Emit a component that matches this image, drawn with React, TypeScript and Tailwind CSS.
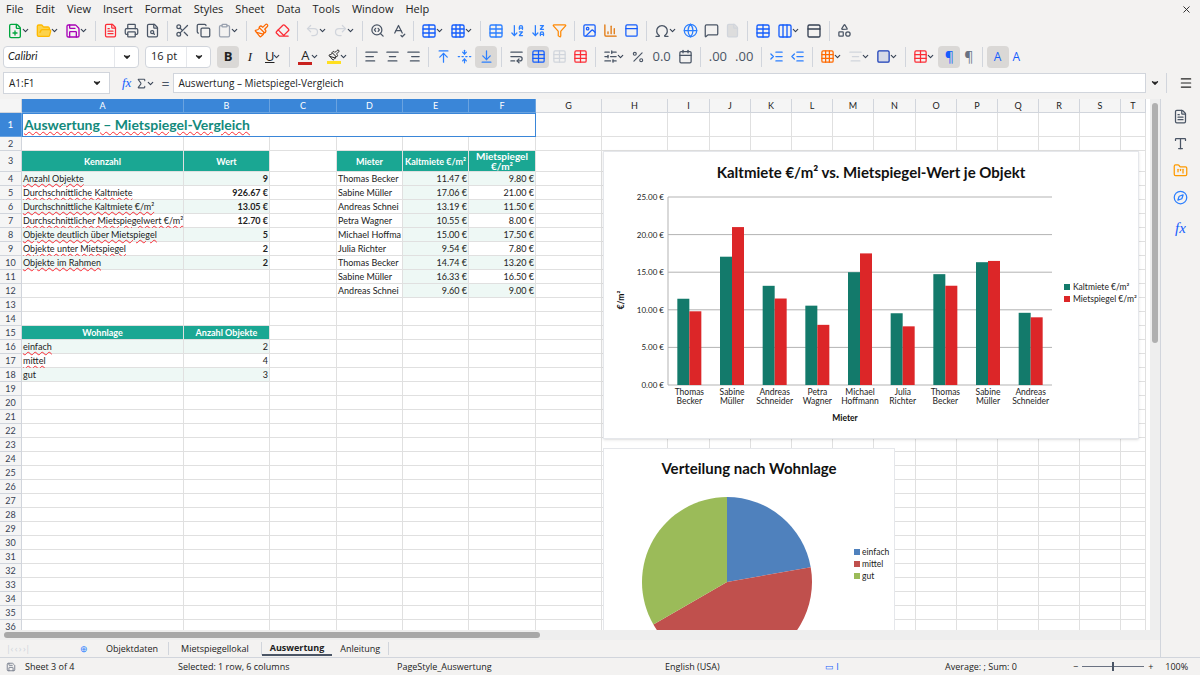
import {
  FilePlus, FolderOpen, Save, FileText, Printer, FileSearch, Scissors, Copy, Clipboard, Paintbrush, Eraser,
  Undo2, Redo2, SearchCode, SpellCheck, Table, Grid3x3, ArrowDownAZ, ArrowDownZA, Filter, Image, BarChart3,
  Omega, Globe, MessageSquare, File, Columns3, PanelTop, Shapes, ChevronDown, AlignLeft, AlignCenter, AlignRight,
  ArrowUpToLine, FoldVertical, ArrowDownToLine, WrapText, Percent, Calendar, IndentIncrease, IndentDecrease,
  Square, Menu, SlidersHorizontal, Type, FolderKanban, Compass, X, Sigma,
} from 'lucide-react'

const COLS = ['A', 'B', 'C', 'D', 'E', 'F', 'G', 'H', 'I', 'J', 'K', 'L', 'M', 'N', 'O', 'P', 'Q', 'R', 'S', 'T']
const W = [162, 86, 67, 66, 66, 67, 66, 66, 42, 41, 41, 41, 41, 42, 41, 41, 41, 41, 41, 25]

const teal = 'bg-[#1aa793] text-white font-bold text-center'
const tint = 'bg-[#eef8f5]'

const statsRows: [string, string][] = [
  ['Anzahl Objekte', '9'],
  ['Durchschnittliche Kaltmiete', '926.67 €'],
  ['Durchschnittliche Kaltmiete €/m²', '13.05 €'],
  ['Durchschnittlicher Mietspiegelwert €/m²', '12.70 €'],
  ['Objekte deutlich über Mietspiegel', '5'],
  ['Objekte unter Mietspiegel', '2'],
  ['Objekte im Rahmen', '2'],
]
const mieter: [string, number, number][] = [
  ['Thomas Becker', 11.47, 9.8],
  ['Sabine Müller', 17.06, 21.0],
  ['Andreas Schnei', 13.19, 11.5],
  ['Petra Wagner', 10.55, 8.0],
  ['Michael Hoffma', 15.0, 17.5],
  ['Julia Richter', 9.54, 7.8],
  ['Thomas Becker', 14.74, 13.2],
  ['Sabine Müller', 16.33, 16.5],
  ['Andreas Schnei', 9.6, 9.0],
]
const chartNames = [['Thomas', 'Becker'], ['Sabine', 'Müller'], ['Andreas', 'Schneider'], ['Petra', 'Wagner'], ['Michael', 'Hoffmann'], ['Julia', 'Richter'], ['Thomas', 'Becker'], ['Sabine', 'Müller'], ['Andreas', 'Schneider']]
const lage: [string, string][] = [['einfach', '2'], ['mittel', '4'], ['gut', '3']]

type Cell = { t?: string; cls?: string; sq?: boolean }

function cellAt(r: number, c: number): Cell {
  if (r === 3) {
    if (c === 0) return { t: 'Kennzahl', cls: teal }
    if (c === 1) return { t: 'Wert', cls: teal }
    if (c === 3) return { t: 'Mieter', cls: teal }
    if (c === 4) return { t: 'Kaltmiete €/m²', cls: teal }
    if (c === 5) return { t: 'Mietspiegel €/m²', cls: teal + ' leading-[9px] text-[10px] px-3' }
  }
  if (r >= 4 && r <= 10 && c <= 1) {
    const s = statsRows[r - 4]
    const bg = r % 2 === 0 ? tint : ''
    return c === 0 ? { t: s[0], cls: bg + ' whitespace-nowrap', sq: true } : { t: s[1], cls: bg + ' text-right font-bold' }
  }
  if (r >= 4 && r <= 12 && c >= 3 && c <= 5) {
    const m = mieter[r - 4]
    if (c === 3) return { t: m[0], cls: 'whitespace-nowrap overflow-hidden' }
    if (c === 4) return { t: m[1].toFixed(2) + ' €', cls: tint + ' text-right' }
    return { t: m[2].toFixed(2) + ' €', cls: (r % 2 === 0 ? tint : '') + ' text-right' }
  }
  if (r === 15) {
    if (c === 0) return { t: 'Wohnlage', cls: teal }
    if (c === 1) return { t: 'Anzahl Objekte', cls: teal }
  }
  if (r >= 16 && r <= 18 && c <= 1) {
    const l = lage[r - 16]
    const bg = r % 2 === 0 ? tint : ''
    return c === 0 ? { t: l[0], cls: bg, sq: r !== 18 } : { t: l[1], cls: bg + ' text-right' }
  }
  return {}
}

function rowH(r: number) {
  if (r === 1) return 'h-[24px]'
  if (r === 3) return 'h-[21px]'
  return 'h-[14px]'
}

function Ic({ children }: { children: React.ReactNode }) {
  return <div className="flex items-center px-[3px]">{children}</div>
}
function Dd() {
  return <ChevronDown size={9} strokeWidth={3} className="text-gray-700 -ml-[2px]" />
}
function Sep() {
  return <div className="w-px h-5 bg-gray-300 mx-1" />
}

function BarChart() {
  const x0 = 64, x1 = 448, y0 = 233, y1 = 45
  const gw = (x1 - x0) / 9
  const yv = (v: number) => y0 - (v / 25) * (y0 - y1)
  return (
    <svg width="534" height="286" className="bg-white" style={{ fontFamily: 'Lato, sans-serif' }}>
      <text x="267" y="26" textAnchor="middle" fontSize="15" fontWeight="bold" fill="#111">Kaltmiete €/m² vs. Mietspiegel-Wert je Objekt</text>
      {[0, 5, 10, 15, 20, 25].map(v => (
        <g key={v}>
          <line x1={x0} x2={x1} y1={yv(v)} y2={yv(v)} stroke="#b3b3b3" />
          <text x={x0 - 4} y={yv(v) + 3} textAnchor="end" fontSize="8" fill="#222">{v.toFixed(2)} €</text>
        </g>
      ))}
      <line x1={x0} x2={x0} y1={y1} y2={y0} stroke="#b3b3b3" />
      {mieter.map((m, i) => {
        const cx = x0 + gw * i + gw / 2
        return (
          <g key={i}>
            <rect x={cx - 12} y={yv(m[1])} width="12" height={y0 - yv(m[1])} fill="#137a6b" />
            <rect x={cx} y={yv(m[2])} width="12" height={y0 - yv(m[2])} fill="#dc2628" />
            <text x={cx} y={y0 + 10} textAnchor="middle" fontSize="8.5" fill="#222">{chartNames[i][0]}</text>
            <text x={cx} y={y0 + 19} textAnchor="middle" fontSize="8.5" fill="#222">{chartNames[i][1]}</text>
          </g>
        )
      })}
      <text x="241" y="269" textAnchor="middle" fontSize="8.5" fontWeight="bold" fill="#111">Mieter</text>
      <text x="20" y="148" textAnchor="middle" fontSize="8.5" fontWeight="bold" fill="#111" transform="rotate(-90 20 148)">€/m²</text>
      <rect x="460" y="132" width="6" height="6" fill="#137a6b" />
      <text x="469" y="138" fontSize="8.5" fill="#222">Kaltmiete €/m²</text>
      <rect x="460" y="144" width="6" height="6" fill="#dc2628" />
      <text x="469" y="150" fontSize="8.5" fill="#222">Mietspiegel €/m²</text>
    </svg>
  )
}

function PieChart() {
  const cx = 123, cy = 133, r = 85
  const pt = (deg: number) => {
    const a = ((deg - 90) * Math.PI) / 180
    return `${cx + r * Math.cos(a)} ${cy + r * Math.sin(a)}`
  }
  const slice = (a: number, b: number, fill: string) => (
    <path d={`M${cx} ${cy} L${pt(a)} A${r} ${r} 0 ${b - a > 180 ? 1 : 0} 1 ${pt(b)} Z`} fill={fill} />
  )
  return (
    <svg width="290" height="183" className="bg-white" style={{ fontFamily: 'Lato, sans-serif' }}>
      <text x="145" y="25" textAnchor="middle" fontSize="15" fontWeight="bold" fill="#111">Verteilung nach Wohnlage</text>
      {slice(0, 80, '#4f81bd')}
      {slice(80, 240, '#c0504d')}
      {slice(240, 360, '#9bbb59')}
      {[['einfach', '#4f81bd'], ['mittel', '#c0504d'], ['gut', '#9bbb59']].map(([l, c], i) => (
        <g key={l}>
          <rect x="250" y={100 + i * 12} width="6" height="6" fill={c} />
          <text x="258" y={106 + i * 12} fontSize="8.5" fill="#222">{l}</text>
        </g>
      ))}
    </svg>
  )
}

export default function App() {
  const rows = Array.from({ length: 37 }, (_, i) => i + 1)
  return (
    <div className="w-[1200px] h-[675px] overflow-hidden bg-[#f3f2f1] flex flex-col text-[#222]" style={{ fontFamily: '"Open Sans", "Noto Sans", sans-serif' }}>
      {/* menu */}
      <div className="h-[18px] flex items-center text-[11px] px-[6px] gap-[12px] shrink-0">
        {['File', 'Edit', 'View', 'Insert', 'Format', 'Styles', 'Sheet', 'Data', 'Tools', 'Window', 'Help'].map(m => <span key={m}>{m}</span>)}
        <X size={11} className="ml-auto mr-[2px]" />
      </div>
      {/* toolbar 1 */}
      <div className="h-[25px] flex items-center px-[4px] shrink-0">
        <Ic><FilePlus size={16} className="text-green-600" /><Dd /></Ic>
        <Ic><FolderOpen size={16} className="text-amber-400" fill="#fcd34d" /><Dd /></Ic>
        <Ic><Save size={16} className="text-fuchsia-700" /><Dd /></Ic>
        <Sep />
        <Ic><FileText size={15} className="text-red-500" /></Ic>
        <Ic><Printer size={15} className="text-gray-600" /></Ic>
        <Ic><FileSearch size={15} className="text-gray-600" /></Ic>
        <Sep />
        <Ic><Scissors size={15} className="text-gray-600" /></Ic>
        <Ic><Copy size={15} className="text-gray-600" /></Ic>
        <Ic><Clipboard size={15} className="text-gray-400" /><Dd /></Ic>
        <Sep />
        <Ic><Paintbrush size={15} className="text-orange-500" /></Ic>
        <Ic><Eraser size={15} className="text-red-500" /></Ic>
        <Sep />
        <Ic><Undo2 size={15} className="text-gray-300" /><Dd /></Ic>
        <Ic><Redo2 size={15} className="text-gray-300" /><Dd /></Ic>
        <Sep />
        <Ic><SearchCode size={15} className="text-gray-600" /></Ic>
        <Ic><SpellCheck size={15} className="text-gray-600" /></Ic>
        <Sep />
        <Ic><Table size={16} className="text-blue-600" /><Dd /></Ic>
        <Ic><Grid3x3 size={16} className="text-blue-600" /><Dd /></Ic>
        <Sep />
        <Ic><Table size={16} className="text-blue-500" /></Ic>
        <Ic><ArrowDownAZ size={15} className="text-blue-500" /></Ic>
        <Ic><ArrowDownZA size={15} className="text-blue-500" /></Ic>
        <Ic><Filter size={15} className="text-orange-400" /></Ic>
        <Sep />
        <Ic><Image size={15} className="text-blue-600" /></Ic>
        <Ic><BarChart3 size={15} className="text-amber-600" /></Ic>
        <Ic><PanelTop size={15} className="text-blue-600" /></Ic>
        <Sep />
        <Ic><Omega size={16} className="text-gray-600" /><Dd /></Ic>
        <Ic><Globe size={15} className="text-blue-500" /></Ic>
        <Ic><MessageSquare size={15} className="text-gray-600" /></Ic>
        <Ic><File size={15} className="text-gray-300" fill="#ddd" /></Ic>
        <Sep />
        <Ic><Table size={16} className="text-blue-600" /></Ic>
        <Ic><Columns3 size={16} className="text-blue-600" /><Dd /></Ic>
        <Ic><PanelTop size={16} className="text-gray-700" /></Ic>
        <Sep />
        <Ic><Shapes size={15} className="text-gray-600" /></Ic>
      </div>
      {/* toolbar 2 */}
      <div className="h-[27px] flex items-center px-[3px] shrink-0 text-[11px]">
        <div className="w-[136px] h-[22px] bg-white border border-gray-300 rounded-sm flex items-center">
          <span className="italic pl-[4px] flex-1" style={{ fontFamily: 'Lato, sans-serif' }}>Calibri</span>
          <div className="w-[24px] h-full flex items-center justify-center border-l border-gray-200"><ChevronDown size={10} strokeWidth={3} fill="#333" /></div>
        </div>
        <div className="w-[66px] h-[22px] bg-white border border-gray-300 rounded-sm flex items-center ml-[6px]">
          <span className="pl-[5px] flex-1">16 pt</span>
          <div className="w-[24px] h-full flex items-center justify-center border-l border-gray-200"><ChevronDown size={10} strokeWidth={3} fill="#333" /></div>
        </div>
        <div className="w-[22px] h-[22px] ml-[6px] bg-[#dad8d6] rounded flex items-center justify-center font-bold text-[13px]">B</div>
        <div className="w-[22px] flex justify-center italic text-[13px]" style={{ fontFamily: '"Liberation Serif", serif' }}>I</div>
        <div className="flex items-center px-1 text-[13px] underline">U<Dd /></div>
        <Sep />
        <div className="flex items-center px-1"><div className="flex flex-col items-center"><span className="text-[13px] leading-[13px]">A</span><div className="w-[14px] h-[3px] bg-[#c9211e]" /></div><Dd /></div>
        <div className="flex items-center px-1"><div className="flex flex-col items-center"><Paintbrush size={12} /><div className="w-[14px] h-[3px] bg-yellow-300" /></div><Dd /></div>
        <Sep />
        <Ic><AlignLeft size={15} className="text-gray-600" /></Ic>
        <Ic><AlignCenter size={15} className="text-gray-600" /></Ic>
        <Ic><AlignRight size={15} className="text-gray-600" /></Ic>
        <Sep />
        <Ic><ArrowUpToLine size={15} className="text-blue-500" /></Ic>
        <Ic><FoldVertical size={15} className="text-blue-500" /></Ic>
        <div className="w-[22px] h-[22px] bg-[#dad8d6] rounded flex items-center justify-center"><ArrowDownToLine size={15} className="text-blue-500" /></div>
        <Sep />
        <Ic><WrapText size={15} className="text-gray-600" /></Ic>
        <div className="w-[22px] h-[22px] bg-[#dad8d6] rounded flex items-center justify-center"><Table size={15} className="text-blue-600" /></div>
        <Ic><Table size={15} className="text-gray-300" /></Ic>
        <Ic><Table size={15} className="text-red-500" /></Ic>
        <Sep />
        <Ic><SlidersHorizontal size={15} className="text-gray-600" /><Dd /></Ic>
        <Ic><Percent size={14} className="text-gray-600" /></Ic>
        <span className="px-1 text-[13px] text-gray-600">0.0</span>
        <Ic><Calendar size={15} className="text-gray-600" /></Ic>
        <Sep />
        <span className="px-1 text-[13px] text-gray-600">.00</span>
        <span className="px-1 text-[13px] text-gray-600">.00</span>
        <Sep />
        <Ic><IndentIncrease size={15} className="text-blue-500" /></Ic>
        <Ic><IndentDecrease size={15} className="text-blue-500" /></Ic>
        <Sep />
        <Ic><Grid3x3 size={15} className="text-orange-500" /><Dd /></Ic>
        <Ic><AlignCenter size={15} className="text-gray-300" /><Dd /></Ic>
        <Ic><Square size={15} className="text-blue-800" fill="#1e40af22" /><Dd /></Ic>
        <Sep />
        <Ic><Table size={15} className="text-red-500" /><Dd /></Ic>
        <div className="w-[22px] h-[22px] bg-[#dad8d6] rounded flex items-center justify-center text-[14px] text-blue-600">¶</div>
        <span className="px-1 text-[14px] text-gray-500">¶</span>
        <Sep />
        <div className="w-[22px] h-[22px] bg-[#dad8d6] rounded flex items-center justify-center text-[12px] text-blue-600">A</div>
        <span className="px-1 text-[12px] text-blue-600">A</span>
      </div>
      {/* formula bar */}
      <div className="h-[26px] flex items-center px-[3px] shrink-0 text-[10px]">
        <div className="w-[107px] h-[22px] bg-white border border-gray-300 flex items-center">
          <span className="pl-[5px] flex-1">A1:F1</span>
          <div className="w-[24px] h-full flex items-center justify-center"><ChevronDown size={10} strokeWidth={3} fill="#333" /></div>
        </div>
        <span className="ml-[12px] italic text-blue-600 text-[13px]" style={{ fontFamily: '"Liberation Serif", serif' }}>fx</span>
        <Sigma size={13} className="ml-1 text-gray-600" /><Dd />
        <span className="ml-[6px] text-[14px] text-gray-600">=</span>
        <div className="ml-[4px] w-[973px] h-[20px] bg-white border border-gray-300 flex items-center pl-[4px]">Auswertung – Mietspiegel-Vergleich</div>
        <ChevronDown size={10} strokeWidth={3} fill="#333" className="ml-[4px]" />
        <div className="w-px h-[20px] bg-gray-300 ml-[6px]" />
        <Menu size={14} className="ml-[12px]" />
      </div>
      {/* body */}
      <div className="flex flex-1 min-h-0 mt-[3px]">
        <div className="w-[1160px] flex flex-col">
          <div className="flex flex-1 min-h-0">
            <div className="relative w-[1150px] overflow-hidden bg-white" style={{ fontFamily: 'Lato, "Liberation Sans", sans-serif' }}>
              {/* column header */}
              <div className="flex h-[14px] text-[9px]">
                <div className="w-[22px] bg-[#f5f5f5] border-r border-b border-gray-300 shrink-0" />
                {COLS.map((c, i) => (
                  <div key={c} className={`shrink-0 flex items-center justify-center border-r border-b ${i <= 5 ? 'bg-[#3a86d8] text-white border-[#6aa3e0]' : 'bg-[#f5f5f5] border-gray-300'}`} style={{ width: W[i] }}>{c}</div>
                ))}
              </div>
              {rows.map(r => (
                <div key={r} className={`flex ${rowH(r)} text-[9px]`}>
                  <div className={`w-[22px] shrink-0 flex items-center justify-center border-r border-b ${r === 1 ? 'bg-[#3a86d8] text-white border-[#6aa3e0] text-[10px]' : 'bg-[#f5f5f5] border-gray-300 text-gray-700'}`}>{r}</div>
                  {r === 1 ? (
                    <>
                      <div className="shrink-0 w-[514px] border border-[#3a86d8] flex items-end pl-[1px] pb-[1px] text-[14px] font-bold text-[#138a7c] underline decoration-wavy decoration-red-500 decoration-1">Auswertung – Mietspiegel-Vergleich</div>
                      {W.slice(6).map((w, i) => <div key={i} className="shrink-0 border-r border-b border-[#e0e0e0]" style={{ width: w }} />)}
                    </>
                  ) : (
                    W.map((w, c) => {
                      const cell = cellAt(r, c)
                      return (
                        <div key={c} className={`shrink-0 flex items-center px-[1px] border-r border-b border-[#e0e0e0] leading-none ${cell.cls ?? ''} ${cell.cls?.includes('text-center') ? 'justify-center' : ''} ${cell.cls?.includes('text-right') ? 'justify-end' : ''}`} style={{ width: w }}>
                          <span className={cell.sq ? 'underline decoration-wavy decoration-red-500 decoration-1' : ''}>{cell.t}</span>
                        </div>
                      )
                    })
                  )}
                </div>
              ))}
              <div className="absolute left-[603px] top-[52px] shadow-sm border border-gray-200"><BarChart /></div>
              <div className="absolute left-[603px] top-[349px] border border-gray-200"><PieChart /></div>
            </div>
            <div className="w-[10px] bg-[#eeeeee] flex justify-center py-[4px]"><div className="w-[6px] h-[240px] bg-[#b0b0b0] rounded" /></div>
          </div>
          <div className="h-[10px] bg-[#eeeeee] flex items-center px-[4px]"><div className="w-[536px] h-[6px] bg-[#a8a8a8] rounded" /></div>
          <div className="h-[17px] flex items-center text-[9px] gap-0 bg-[#f3f2f1]">
            <span className="text-gray-300 pl-[6px] w-[72px] tracking-tighter">|‹ ‹ › ›|</span>
            <span className="text-blue-500 px-[8px]">⊕</span>
            <span className="px-[10px] border-r border-gray-300">Objektdaten</span>
            <span className="px-[12px] border-r border-gray-300">Mietspiegellokal</span>
            <span className="px-[8px] font-bold border-b-2 border-gray-600">Auswertung</span>
            <span className="px-[8px] border-r border-gray-300">Anleitung</span>
          </div>
        </div>
        <div className="w-[40px] flex flex-col items-center gap-[12px] pt-[10px] border-l border-gray-300">
          <FileText size={15} className="text-gray-600" />
          <Type size={15} className="text-gray-600" />
          <FolderKanban size={15} className="text-amber-500" />
          <Compass size={15} className="text-blue-500" />
          <span className="italic text-blue-600 text-[15px]" style={{ fontFamily: '"Liberation Serif", serif' }}>fx</span>
        </div>
      </div>
      <div className="h-[18px] shrink-0 flex items-center text-[9px] border-t border-gray-300">
        <Save size={10} className="ml-[6px] text-gray-500" />
        <span className="ml-[9px] w-[153px]">Sheet 3 of 4</span>
        <span className="w-[219px]">Selected: 1 row, 6 columns</span>
        <span className="w-[268px]">PageStyle_Auswertung</span>
        <span className="w-[160px]">English (USA)</span>
        <span className="w-[120px] text-blue-600">▭ I</span>
        <span className="w-[128px]">Average: ; Sum: 0</span>
        <span>−</span>
        <div className="w-[62px] h-px bg-gray-500 mx-[4px] relative"><div className="absolute left-[30px] -top-[4px] w-[2px] h-[9px] bg-gray-600" /></div>
        <span>+</span>
        <span className="ml-[12px]">100%</span>
      </div>
    </div>
  )
}
